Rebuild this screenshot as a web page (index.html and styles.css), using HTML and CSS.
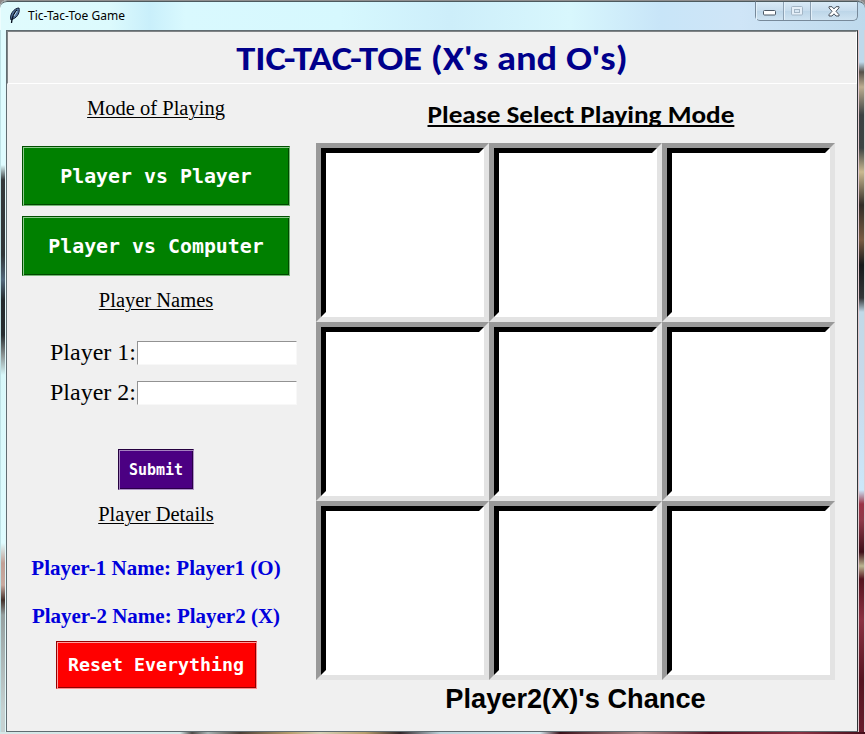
FILE: index.html
```html
<!DOCTYPE html>
<html lang="en">
<head>
<meta charset="utf-8">
<title>Tic-Tac-Toe Game</title>
<link rel="stylesheet" href="styles.css">
</head>
<body>
<div class="window">
  <div class="titlebar">
    <svg class="feather" width="12" height="17" viewBox="0 0 12 17"><path d="M2 13C0 8 5 1 10 1c1 4-1 9-6 11z" fill="#55779f" stroke="#101c34"/><path d="M8 3C5 6 3 9 2.500 16" fill="none" stroke="#07101f" stroke-width="1.300"/><path d="M8 4L5 9" stroke="#b9d4ea" stroke-width="1"/></svg>
    <span class="caption">Tic-Tac-Toe Game</span>
    <div class="controls">
      <span class="control"><svg width="13" height="6"><rect x=".5" y=".5" width="12" height="4.500" rx="1" fill="#fff" stroke="#4c5865"/></svg></span>
      <span class="control"><svg width="12" height="10"><rect x=".5" y=".5" width="11" height="8.500" rx="1" fill="#e5eff8" stroke="#a3b5c5"/><rect x="3.500" y="3.500" width="5" height="3" fill="#d8e7f4" stroke="#a3b5c5"/></svg></span>
      <span class="control close"><svg width="12" height="11" viewBox="0 0 12 11"><path d="M1 .7h3l2 2.200L8 .7h3v1.200L8 5.300l3 3.400V10H8L6 7.800 4 10H1V8.700l3-3.400-3-3.400z" fill="#fff" stroke="#48515c"/></svg></span>
    </div>
  </div>
  <div class="frame">
    <div class="edge left"></div>
    <div class="client">
      <header class="banner"><h1 class="title">TIC-TAC-TOE (X's and O's)</h1></header>
      <main class="content">
        <aside class="panel">
          <h2 class="heading">Mode of Playing</h2>
          <button class="btn mode">Player vs Player</button>
          <button class="btn mode">Player vs Computer</button>
          <h2 class="heading names">Player Names</h2>
          <label class="field">Player 1:<input type="text"></label>
          <label class="field">Player 2:<input type="text"></label>
          <button class="btn submit">Submit</button>
          <h2 class="heading">Player Details</h2>
          <p class="detail">Player-1 Name: Player1 (O)</p>
          <p class="detail">Player-2 Name: Player2 (X)</p>
          <button class="btn reset">Reset Everything</button>
        </aside>
        <section class="game">
          <h2 class="prompt"><span class="prompt-text">Please Select Playing Mode</span></h2>
          <div class="board">
            <div class="cell"></div><div class="cell"></div><div class="cell"></div>
            <div class="cell"></div><div class="cell"></div><div class="cell"></div>
            <div class="cell"></div><div class="cell"></div><div class="cell"></div>
          </div>
          <p class="turn">Player2(X)'s Chance</p>
        </section>
      </main>
    </div>
    <div class="edge right"></div>
  </div>
  <div class="bottom-edge"></div>
</div>
</body>
</html>
```
FILE: styles.css
```css
* { box-sizing: border-box; }
body { margin: 0; width: 865px; height: 734px; overflow: hidden; background: #8d8888; }
h1, h2, p { margin: 0; }
.window {
  display: flex; flex-direction: column; width: 865px; height: 734px;
  border-radius: 7px 7px 0 0; overflow: hidden; background: #dffafd;
}
.titlebar {
  display: flex; align-items: flex-start; flex: 0 0 30px; padding: 0 7px 0 9px;
  border-top: 1px solid #908e8e; border-radius: 7px 7px 0 0;
  box-shadow: inset 0 1px #4d5a5e, inset 1px 0 #edfdfe;
  background: linear-gradient(90deg, #e0fbfd 0, #dcfafd 110px, #c9effb 150px, #d9f9fe 185px, #d6f8fe 340px, #cdeefa 450px, #d8f7fd 570px, #c8e5f8 660px, #cfe5f7 740px, #bed9ec 100%);
}
.feather { margin-top: 6px; }
.caption { margin: 7px 0 0 7px; font: 12px/16px "Noto Sans", sans-serif; color: #000; white-space: nowrap; }
.controls { display: flex; width: 103px; height: 20px; margin-left: auto; border: 1px solid #77899a; border-top-color: #4d5a5e; border-radius: 0 0 5px 5px; background: linear-gradient(#d9eaf6, #c7dced 48%, #bcd5e8 50%, #cfe3f1); }
.control { display: flex; align-items: center; justify-content: center; width: 27px; border-right: 1px solid #8da1b3; box-shadow: inset 1px 0 #e3f0f9; }
.control:first-child { padding-top: 4px; width: 28px; }
.close { flex: 1; border: 0; }
.frame { display: flex; flex: 0 0 702px; }
.edge { flex: 0 0 6px; border-right: 1px solid #e2f9fb; border-left: 1px solid #bfe2e6; }
.left { background: linear-gradient(#dffcff 0 135px, #34383a 150px, #303537 225px, #53697c 250px, #23292c 270px, #272d30 305px, #8b9393 325px, #d8f8fa 345px, #dffcff 513px, #c1a096 533px, #c8aaa0 555px, #43302a 570px, #96a0a0 585px, #c5d1d1 680px); }
.right { flex-basis: 7px; border-color: #dce9ec #e3cbd1; background: linear-gradient(#bfd9eb 0 32px, #565049 42px, #bdad91 57px, #3c4142 85px, #3d4343 118px, #cab991 142px, #322c27 175px, #785b42 210px, #17191b 235px, #343638 268px, #c1d9e8 282px, #c8d9ea 350px, #cce7fa 460px, #9a3346 474px, #8f3949 490px, #3f0e18 522px, #bcb591 536px, #54131e 549px, #8b3142 590px, #541420 650px, #671d2c); }
.client { width: 852px; border: 1px solid #606c71; border-right-color: #303638; background: #f0f0f0; }
.banner { display: flex; justify-content: center; height: 53px; border: 1px solid #808486; border-bottom-color: #fff; border-right-color: #fff; }
.title { font: bold 35px/52px Carlito, Lato, sans-serif; width: 390px; display: flex; justify-content: center; color: #00008b; white-space: nowrap; transform: scaleX(1.1); }
.content { display: flex; height: 647px; }
.panel { display: flex; flex-direction: column; align-items: center; width: 298px; padding-top: 11px; }
.heading { font: 20.500px/26px "Liberation Serif", serif; text-decoration: underline; text-decoration-thickness: 1px; text-underline-offset: 2px; }
.btn { display: block; padding: 0; color: #fff; font-family: "DejaVu Sans Mono", monospace; font-weight: bold; border: 1px solid; flex: none; white-space: nowrap; }
.mode { width: 268px; height: 60px; margin-bottom: 10px; background: #008000; font-size: 19.900px; border-color: #004f00 #78b978 #78b978 #004f00; box-shadow: inset 1px 1px #8dc98d, inset -1px -1px #004800; }
.heading + .mode { margin-top: 25px; }
.names { margin: 1px 0 28px; }
.field { display: flex; align-items: flex-start; height: 24px; margin: 0 0 16px 35px; font: 24px/22px "Liberation Serif", serif; white-space: nowrap; }
.field input { width: 160px; height: 24px; margin-left: 1px; padding: 0 2px; border: 1px solid #f6f6f6; border-color: #929292 #f8f8f8 #f8f8f8 #929292; background: #fff; font-size: 16px; outline: 0; }
.submit { width: 76px; height: 41px; margin: 28px 0 11px; background: #4b0082; font-size: 15px; border-color: #25003f #b194c8 #b194c8 #25003f; box-shadow: inset 1px 1px #a583c0, inset -1px -1px #2a0049; }
.detail { font: bold 21px/24px "Liberation Serif", serif; color: #0000dc; white-space: nowrap; margin-top: 24px; }
.heading + .detail { margin-top: 29px; }
.reset { width: 201px; height: 48px; margin-top: 13px; padding-bottom: 2px; background: #f00; font-size: 18.300px; border-color: #950000 #ff8c8c #ff8c8c #950000; box-shadow: inset 1px 1px #ff9d9d, inset -1px -1px #910000; }
.game { width: 519px; margin-left: 11px; padding-top: 15px; }
.prompt { height: 44px; font: bold 25px/32px Carlito, Lato, sans-serif; text-align: center; white-space: nowrap; transform: scaleX(1.088); }
.prompt-text { position: relative; left: 5px; text-decoration: underline; text-decoration-thickness: 2px; text-underline-offset: 2px; text-decoration-skip-ink: none; }
.board { display: grid; grid-template: repeat(3, 179px) / repeat(3, 173px); }
.cell { display: flex; border: 5px solid; border-color: #999 #e3e3e3 #e3e3e3 #999; background: #fff; }
.cell::before { content: ""; flex: 1; border: 5px solid; border-color: #000 #fff #fff #000; }
.turn { font: bold 27.200px/38px "Liberation Sans", sans-serif; text-align: center; white-space: nowrap; }
.bottom-edge { flex: 1; background: linear-gradient(90deg, #d5e8e8 0 180px, #4e4b48 192px, #a9b5b5 208px, #4b3f36 240px, #b79f6d 290px, #d8d2b8 320px, #b79f6d 365px, #33272a 400px, #bcd2da 440px, #d5e8ee 540px, #3a0f18 560px, #b08d8d 640px, #5a1626 710px, #8b3142 800px, #450e1a); }
```
